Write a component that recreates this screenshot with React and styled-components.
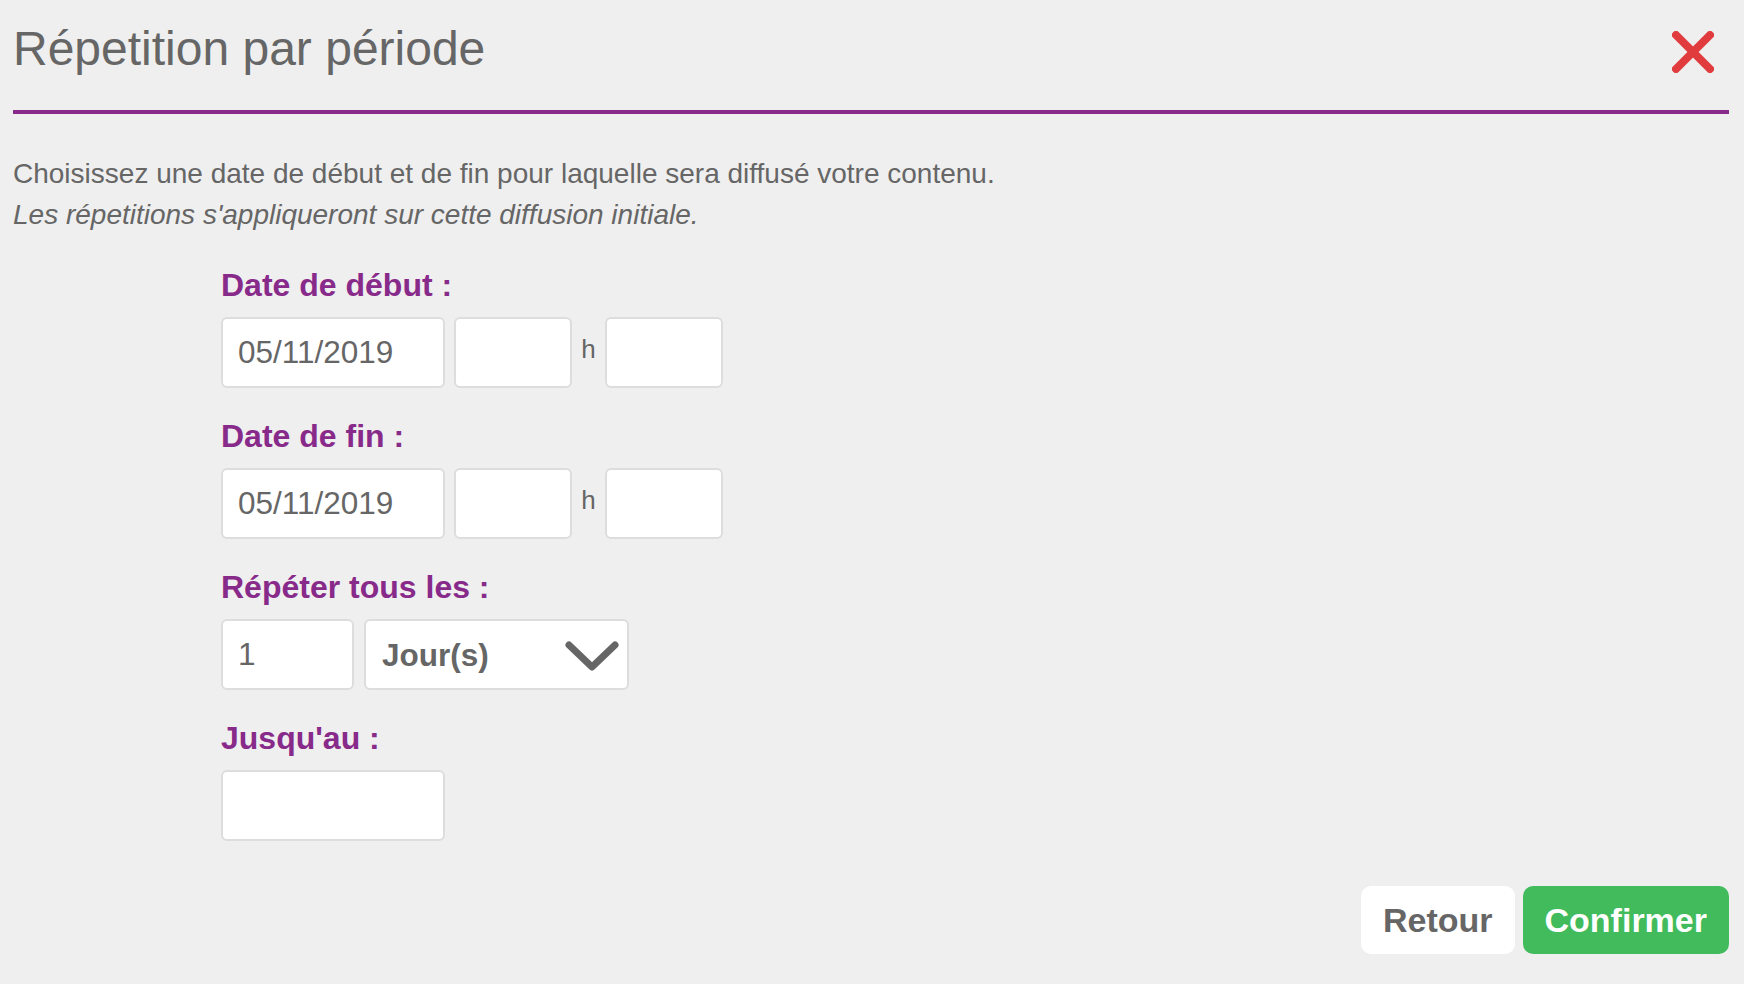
import React from 'react';
import styled, { createGlobalStyle } from 'styled-components';

const GlobalStyle = createGlobalStyle`
    html, body {
        margin: 0;
        padding: 0;
        background-color: #efefef;
    }

    body {
        font-family: "Liberation Sans", Arial, Helvetica, sans-serif;
        color: #666666;
    }
`;

const App = () => {
    return (
        <>
            <GlobalStyle />
            <Page>
                <Header>
                    <Title>Répetition par période</Title>
                    <CloseButton aria-label="Fermer">
                        <svg width="42" height="42" viewBox="0 0 42 42">
                            <line x1="4" y1="4" x2="38" y2="38" stroke="#e03c3e" strokeWidth="8" strokeLinecap="round" />
                            <line x1="38" y1="4" x2="4" y2="38" stroke="#e03c3e" strokeWidth="8" strokeLinecap="round" />
                        </svg>
                    </CloseButton>
                </Header>

                <Intro>
                    <p>Choisissez une date de début et de fin pour laquelle sera diffusé votre contenu.</p>
                    <Note>Les répetitions s'appliqueront sur cette diffusion initiale.</Note>
                </Intro>

                <Form>
                    <Field>
                        <Label>Date de début :</Label>
                        <Row>
                            <TextInput width={224} defaultValue="05/11/2019" />
                            <TextInput width={118} />
                            <HourSep>h</HourSep>
                            <TextInput width={118} />
                        </Row>
                    </Field>

                    <Field>
                        <Label>Date de fin :</Label>
                        <Row>
                            <TextInput width={224} defaultValue="05/11/2019" />
                            <TextInput width={118} />
                            <HourSep>h</HourSep>
                            <TextInput width={118} />
                        </Row>
                    </Field>

                    <Field>
                        <Label>Répéter tous les :</Label>
                        <Row $gap={10}>
                            <TextInput width={133} defaultValue="1" />
                            <SelectBox>
                                <span>Jour(s)</span>
                                <svg width="54" height="30" viewBox="0 0 54 30">
                                    <polyline points="4,4 27,26 50,4" fill="none" stroke="#666666" strokeWidth="7" strokeLinecap="round" strokeLinejoin="round" />
                                </svg>
                            </SelectBox>
                        </Row>
                    </Field>

                    <Field>
                        <Label>Jusqu'au :</Label>
                        <Row>
                            <TextInput width={224} />
                        </Row>
                    </Field>
                </Form>

                <Footer>
                    <Button>Retour</Button>
                    <Button $primary>Confirmer</Button>
                </Footer>
            </Page>
        </>
    );
};

const Page = styled.div`
    display: flex;
    flex-direction: column;
    box-sizing: border-box;
    min-height: 984px;
    padding: 0 15px 0 13px;
`;

const Header = styled.div`
    display: flex;
    justify-content: space-between;
    align-items: flex-start;
    box-sizing: border-box;
    height: 114px;
    padding-top: 21px;
    border-bottom: 4px solid #882a8a;
`;

const Title = styled.h1`
    margin: 0;
    font-size: 48px;
    line-height: 56px;
    font-weight: 400;
    color: #666666;
`;

const CloseButton = styled.button`
    display: flex;
    margin: 10px 15px 0 0;
    padding: 0;
    border: none;
    background: none;
    cursor: pointer;
`;

const Intro = styled.div`
    margin-top: 39px;
    font-size: 28px;
    line-height: 41px;
    color: #666666;

    p {
        margin: 0;
    }
`;

const Note = styled.p`
    font-style: italic;
`;

const Form = styled.div`
    display: flex;
    flex-direction: column;
    gap: 28px;
    margin-top: 30px;
    padding-left: 208px;
`;

const Field = styled.div`
    display: flex;
    flex-direction: column;
    gap: 12px;
`;

const Label = styled.label`
    font-size: 32px;
    line-height: 40px;
    font-weight: 700;
    color: #882a8a;
`;

const Row = styled.div`
    display: flex;
    align-items: center;
    gap: ${(props) => props.$gap || 9}px;
`;

const TextInput = styled.input`
    box-sizing: border-box;
    width: ${(props) => props.width}px;
    height: 71px;
    padding: 0 15px;
    border: 2px solid #dddddd;
    border-radius: 6px;
    background-color: white;
    font-family: "Liberation Sans", Arial, Helvetica, sans-serif;
    font-size: 31.5px;
    color: #666666;
    outline: none;
`;

const HourSep = styled.span`
    width: 15px;
    margin-top: -6px;
    text-align: center;
    font-size: 26px;
    color: #666666;
`;

const SelectBox = styled.div`
    display: flex;
    align-items: center;
    justify-content: space-between;
    box-sizing: border-box;
    width: 265px;
    height: 71px;
    padding: 2px 8px 0 16px;
    border: 2px solid #dddddd;
    border-radius: 6px;
    background-color: white;
    font-size: 31.5px;
    font-weight: 700;
    color: #666666;
    cursor: pointer;
`;

const Footer = styled.div`
    display: flex;
    justify-content: flex-end;
    gap: 8px;
    margin-top: 45px;
`;

const Button = styled.button`
    height: 68px;
    padding: 0 22px;
    border: none;
    border-radius: 10px;
    background-color: ${(props) => (props.$primary ? '#41bb5c' : 'white')};
    color: ${(props) => (props.$primary ? 'white' : '#666666')};
    font-family: "Liberation Sans", Arial, Helvetica, sans-serif;
    font-size: 34px;
    font-weight: 700;
    cursor: pointer;
`;

export default App;
